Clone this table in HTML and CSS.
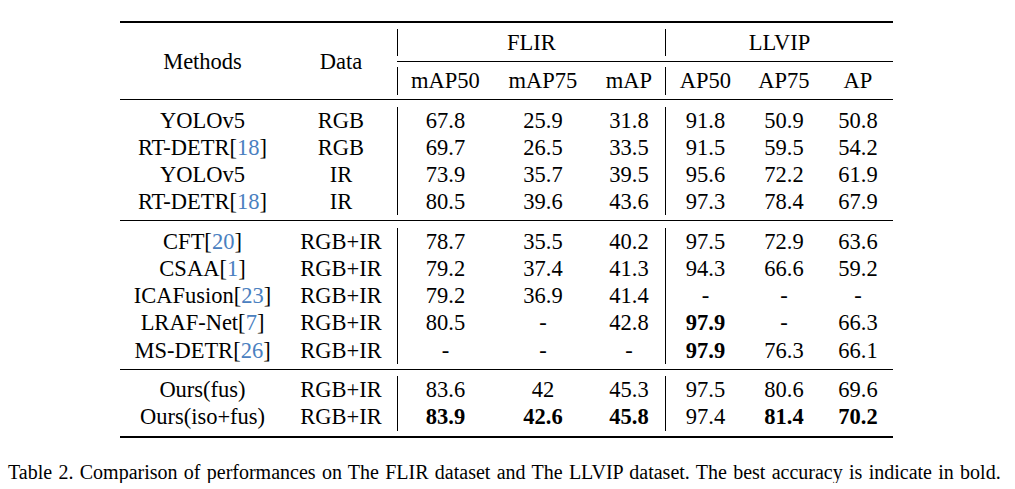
FILE: index.html
```html
<!DOCTYPE html>
<html lang="en">
<head>
<meta charset="utf-8">
<title>Table 2</title>
<link rel="stylesheet" href="styles.css">
</head>
<body>
<div class="page">
  <div class="table">
    <div class="head">
      <div class="h-methods">Methods</div>
      <div class="h-data">Data</div>
      <div class="h-group g-flir bar">FLIR</div>
      <div class="h-group g-llvip bar">LLVIP</div>
      <div class="cmid"></div>
      <div class="h-sub bar">mAP50</div>
      <div class="h-sub">mAP75</div>
      <div class="h-sub">mAP</div>
      <div class="h-sub bar">AP50</div>
      <div class="h-sub">AP75</div>
      <div class="h-sub">AP</div>
    </div>

    <div class="group">
      <div class="c">YOLOv5</div><div class="c">RGB</div><div class="c bar">67.8</div><div class="c">25.9</div><div class="c">31.8</div><div class="c bar">91.8</div><div class="c">50.9</div><div class="c">50.8</div>
      <div class="c">RT-DETR[<span class="ref">18</span>]</div><div class="c">RGB</div><div class="c bar">69.7</div><div class="c">26.5</div><div class="c">33.5</div><div class="c bar">91.5</div><div class="c">59.5</div><div class="c">54.2</div>
      <div class="c">YOLOv5</div><div class="c">IR</div><div class="c bar">73.9</div><div class="c">35.7</div><div class="c">39.5</div><div class="c bar">95.6</div><div class="c">72.2</div><div class="c">61.9</div>
      <div class="c">RT-DETR[<span class="ref">18</span>]</div><div class="c">IR</div><div class="c bar">80.5</div><div class="c">39.6</div><div class="c">43.6</div><div class="c bar">97.3</div><div class="c">78.4</div><div class="c">67.9</div>
    </div>

    <div class="group">
      <div class="c">CFT[<span class="ref">20</span>]</div><div class="c">RGB+IR</div><div class="c bar">78.7</div><div class="c">35.5</div><div class="c">40.2</div><div class="c bar">97.5</div><div class="c">72.9</div><div class="c">63.6</div>
      <div class="c">CSAA[<span class="ref">1</span>]</div><div class="c">RGB+IR</div><div class="c bar">79.2</div><div class="c">37.4</div><div class="c">41.3</div><div class="c bar">94.3</div><div class="c">66.6</div><div class="c">59.2</div>
      <div class="c">ICAFusion[<span class="ref">23</span>]</div><div class="c">RGB+IR</div><div class="c bar">79.2</div><div class="c">36.9</div><div class="c">41.4</div><div class="c bar">-</div><div class="c">-</div><div class="c">-</div>
      <div class="c">LRAF-Net[<span class="ref">7</span>]</div><div class="c">RGB+IR</div><div class="c bar">80.5</div><div class="c">-</div><div class="c">42.8</div><div class="c bar b">97.9</div><div class="c">-</div><div class="c">66.3</div>
      <div class="c">MS-DETR[<span class="ref">26</span>]</div><div class="c">RGB+IR</div><div class="c bar">-</div><div class="c">-</div><div class="c">-</div><div class="c bar b">97.9</div><div class="c">76.3</div><div class="c">66.1</div>
    </div>

    <div class="group last">
      <div class="c">Ours(fus)</div><div class="c">RGB+IR</div><div class="c bar">83.6</div><div class="c">42</div><div class="c">45.3</div><div class="c bar">97.5</div><div class="c">80.6</div><div class="c">69.6</div>
      <div class="c">Ours(iso+fus)</div><div class="c">RGB+IR</div><div class="c bar b">83.9</div><div class="c b">42.6</div><div class="c b">45.8</div><div class="c bar">97.4</div><div class="c b">81.4</div><div class="c b">70.2</div>
    </div>
  </div>

  <p class="caption">Table 2. Comparison of performances on The FLIR dataset and The LLVIP dataset. The best accuracy is indicate in bold.</p>
</div>
</body>
</html>
```

FILE: styles.css
```css
html, body {
  margin: 0;
  padding: 0;
  background: #ffffff;
}

body {
  font-family: "Liberation Serif", "Times New Roman", serif;
  color: #000000;
}

.page {
  width: 1015px;
  padding-top: 21px;
}

.table {
  margin-left: 120px;
  width: 773px;
  border-top: 2px solid #000;
  border-bottom: 2px solid #000;
  font-size: 22.5px;
}

.head,
.group {
  display: grid;
  grid-template-columns: 165px 112px 96px 100px 72px 80px 78px 70px;
}

.head {
  grid-template-rows: 38px 1px 37px;
  border-bottom: 1px solid #000;
}

.h-methods,
.h-data {
  grid-row: 1 / 4;
  align-self: center;
  text-align: center;
  line-height: 27px;
}

.h-methods { grid-column: 1; }
.h-data { grid-column: 2; }

.h-group {
  grid-row: 1;
  align-self: center;
  height: 27px;
  line-height: 27px;
  text-align: center;
}

.g-flir { grid-column: 3 / 6; }
.g-llvip { grid-column: 6 / 9; }

.cmid {
  grid-row: 2;
  grid-column: 3 / 9;
  background: #000;
}

.h-sub {
  grid-row: 3;
  align-self: center;
  height: 28px;
  line-height: 28px;
  text-align: center;
}

.group {
  grid-auto-rows: 27.2px;
  padding: 6.5px 0 5px;
  border-bottom: 1px solid #000;
}

.group.last {
  border-bottom: none;
}

.c {
  line-height: 27.2px;
  text-align: center;
  white-space: nowrap;
}

.bar {
  border-left: 1px solid #000;
}

.b {
  font-weight: bold;
}

.ref {
  color: #4a80c0;
}

.caption {
  margin: 23px 0 0 8px;
  font-size: 20px;
  line-height: 22px;
  word-spacing: 1.3px;
  white-space: nowrap;
}
```
